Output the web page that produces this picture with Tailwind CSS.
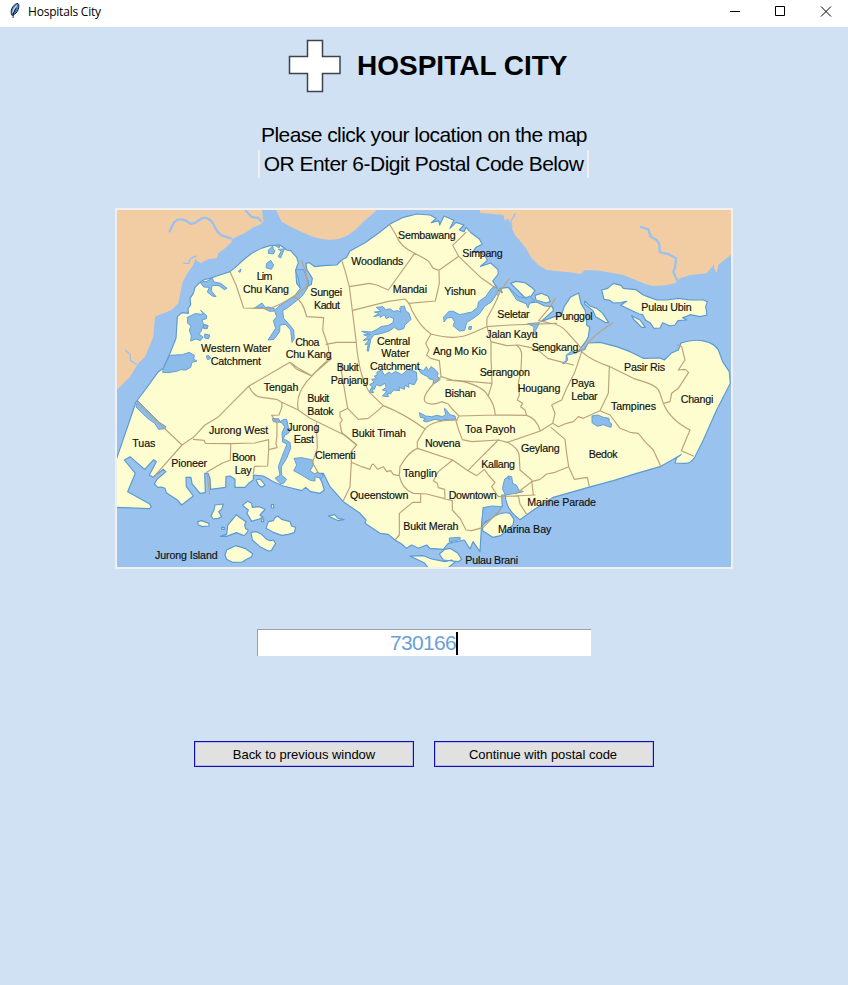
<!DOCTYPE html>
<html lang="en">
<head>
<meta charset="utf-8">
<title>Hospitals City</title>
<script src="https://cdn.jsdelivr.net/npm/@tailwindcss/browser@4"></script>
</head>
<body class="w-[848px] h-[985px] overflow-hidden bg-[#cfe1f3] text-black font-['Liberation_Sans',Arial,sans-serif] flex flex-col">
<header class="h-[27px] shrink-0 bg-white flex items-start">
  <svg class="ml-[8px] mt-[3px] w-[14px] h-[16px]" viewBox="0 0 14 16"><path d="M4 12.500C2.500 9.500 3 6 5 3.500 6.500 1.500 8.500.3 10 .5c1.300.8 1 3.600.2 6C9.300 9 7 11.500 4.800 12z" fill="#4f7fc0" stroke="#1a2538" stroke-width="1"/><path d="M8.800 2.200C6.500 4.500 5 7 4.600 10" stroke="#c9dbed" stroke-width="1.200" fill="none"/><path d="M8 5.500 5.500 10 5 15" stroke="#111" stroke-width=".9" fill="none"/></svg>
  <span class="ml-[6px] mt-[4px] text-[12px] leading-[16px] tracking-[-0.21px] font-['Open_Sans','Noto_Sans',sans-serif]">Hospitals City</span>
  <div class="ml-auto flex">
    <svg class="w-[118px] h-[24px]" viewBox="730 0 118 24" fill="none" stroke="#000" stroke-width="1"><path d="M730 11.500h10M775.500 6.500h9v9h-9z"/><path d="M821 6.500l10 10M831 6.500l-10 10"/></svg>
  </div>
</header>
<main class="flex flex-col items-center">
  <div class="flex self-start ml-[287px] mt-[11px] h-[56px] items-start">
    <svg class="w-[56px] h-[56px]" viewBox="287 38 56 56"><path d="M307.500 40.500h15v16h17.500v17h-17.500v18h-15v-18h-18v-17h18z" fill="#fff" stroke="#3b444d" stroke-width="1.500"/></svg>
    <h1 class="ml-[14px] mt-[12px] text-[28px] leading-[32px] font-bold whitespace-nowrap">HOSPITAL CITY</h1>
  </div>
  <p class="mt-[27px] h-[28px] text-[21px] leading-[28px] whitespace-nowrap tracking-[-0.56px]">Please click your location on the map</p>
  <p class="mt-[1px] ml-[-1px] w-[331px] h-[28px] border-x-2 border-[#f0f0f0] text-center text-[21px] leading-[28px] whitespace-nowrap tracking-[-0.52px]">OR Enter 6-Digit Postal Code Below</p>
  <div class="mt-[30px] w-[618px] h-[361px] self-start ml-[115px] border-2 border-[#f0f0f0]">
  <svg class="block w-[614px] h-[357px]" viewBox="21 30 1842 1071" font-family="Liberation Sans, Arial, sans-serif">
    <rect x="15" y="24" width="1854" height="1083" fill="#9ac2ee"/>
    <g fill="#f2cda3">
      <path d="M15 24H455L460 65 450 74 430 82 410 96 365 118 365 126 345 145 325 160 320 175 295 177 272 190 255 178 250 195 235 215 218 245 205 310 185 330 135 350 130 410 118 440 105 470 85 490 60 530 15 575z"/>
      <path d="M495 24H808L760 65C725 105 690 125 640 118 600 110 550 85 515 65z"/>
      <path d="M1110 24H1869V160L1840 182 1825 195 1820 218 1812 205 1812 193 1800 208 1790 220 1740 225 1710 235 1695 250C1640 263 1615 258 1590 245L1540 225 1470 212 1425 210 1412 222 1390 218 1310 210 1285 195 1265 175 1248 145 1215 105 1202 75 1195 55 1185 62 1180 45 1110 38z"/>
    </g>
    <g fill="none" stroke="#9ac2ee" stroke-width="7" stroke-linejoin="round">
      <path d="M178 97 188 75C200 48 228 58 240 71 262 75 262 55 285 53 318 60 310 95 335 106L365 116M405 30 425 51 445 54 455 65"/><path stroke-width="4" d="M45 450 60 463 62 482 80 493M220 190 237 190 241 175 260 168"/><path d="M1590 80 1615 88 1622 110 1640 120 1648 133 1650 157 1675 162 1698 175 1696 200 1690 215 1702 242"/><path stroke-width="4" d="M1216 40 1202 65 1206 82"/>
    </g>
    <g fill="#fdfdcf" stroke="#5a9ad0" stroke-width="3.500" stroke-linejoin="round">
      <path d="M360 215 375 203 400 180Q440 145 480 137L510 135 530 150 542 152 560 172 565 188 557 210 560 250 575 270 604 253 607 235 590 208 588 190 598 188 615 200 640 197 680 195 695 180 710 172 720 153 765 128 805 100 840 72 880 52 920 42 960 45 978 55 964 68 986 62 989 75 1002 48 1032 61 1020 85 1038 67 1062 75 1048 90 1062 95 1068 82 1085 100 1108 117 1117 133 1098 142 1088 156 1112 158 1127 170 1132 181 1111 199 1142 189 1164 209 1165 222 1148 243 1165 270 1177 278 1170 265 1195 262 1222 290 1250 310 1280 306 1304 318 1328 320 1330 332 1293 365 1333 350 1353 350 1363 319 1382 291 1406 279 1413 311 1425 330 1430 355 1430 375 1439 382 1435 410 1427 425 1404 455 1424 448 1435 429 1470 427 1520 440 1560 455 1600 475 1650 474 1663 480 1683 460 1705 450 1713 429C1765 411 1810 425 1825 450L1838 485 1858 515 1861 550 1820 630 1780 720 1755 770Q1743 791 1725 790L1695 789 1700 773 1713 764 1690 778 1650 800 1580 820 1510 842 1435 862 1330 892 1270 930 1230 959Q1187 929 1186 885L1175 885 1177 920 1120 923 1115 970 1110 1055 1089 1025 1080 1047 1063 1020 1015 1030 1000 1048 960 1045 950 1035 925 1045 905 1035 890 1045 875 1032 855 1020 835 1003 810 1000 765 970 768 960 750 940 700 905 660 860 640 820 622 820 635 845 643 870 630 880 602 875 587 862 575 872 520 858 490 845 460 828 430 825 430 840 416 850 405 862 375 862 375 838 360 828 348 830 347 862 302 868 300 835 294 820 284 820 286 878 270 880 246 851 243 832 228 832 229 860 250 888 215 915 202 900 169 878 165 865 154 861 144 862 133 852 142 837 168 815 160 808 129 832 118 825 139 785 131 779 104 808 60 770 43 780 76 820 53 875 118 911 124 920 118 926 15 922V790L78 606 105 570 145 515 160 505 180 460 198 415 202 350 216 338 235 340 234 325 242 315 240 295 250 280 255 262 270 247 285 238 300 235 320 228z"/>
      <path d="M1202 250 1218 244 1245 248 1262 260 1275 272 1260 293 1243 291zM1275 286 1293 280 1315 289 1321 305 1308 309 1278 300z"/>
      <path d="M1475 270 1493 265 1510 250 1533 256 1540 265 1578 269 1600 285 1613 290 1640 300 1670 300 1705 295 1740 300 1780 300 1792 305 1787 320 1791 345 1770 350 1740 344 1730 349 1718 353 1730 360 1704 362 1695 375 1680 378 1658 368 1650 384 1632 385 1620 368 1607 361 1598 344 1587 342 1532 316 1550 304 1533 308 1510 309 1500 301 1482 298z"/>
      <path d="M1424 303 1440 318 1460 325 1478 340 1496 368 1485 367 1457 350 1449 332 1424 312zM1565 347 1590 360 1606 382 1595 382 1570 357z"/>
      <path d="M315 915 340 912 335 928 326 935 335 950 325 955 310 957 303 948 312 930zM263 965 275 962 297 970 297 978 278 980 265 975zM398 916 412 904 425 910 427 922 448 920 465 928 450 945 459 952 447 957 425 964 418 952 411 940 415 930zM331 1009 350 1003 353 976 379 944 395 956 408 965 404 975 407 986 415 990 410 1000 402 1007 379 998 350 1009zM475 965 490 962 495 953 503 948 515 958 540 965 545 978 557 982 553 998 535 1003 515 1006 490 997 468 985zM423 997 439 995 455 1003 470 1018 480 1022 490 1020 497 1030 484 1052 475 1053 450 1040 427 1020zM345 1065 350 1050 377 1037 405 1045 428 1061 425 1070 410 1078 397 1086 367 1087 350 1078zM484 914h7v10h-7zM335 982h8v6h-8zM455 957h6v8h-6z"/>
      <path d="M1118 976Q1165 930 1200 940L1212 958 1209 975 1172 1007 1148 1012 1118 992zM988 1062 1005 1048 1020 1045 1043 1059 1055 1078 1045 1085 1000 1080zM900 1068 940 1067 965 1077 1005 1085 1025 1080 1035 1087 1005 1110 960 1110 942 1088z"/>
      <path d="M438 840 450 837 465 855 455 862 446 856zM655 948 674 944 684 955 702 959 685 962z"/>
    </g>
    <g fill="#8cbcea" stroke="#62a0d6" stroke-width="3" stroke-linejoin="round">
      <path d="M270 246 290 244 307 235 312 246 332 250 351 265 343 269 327 257 306 256 304 272 318 290 307 288 292 276 298 262 281 261zM470 190 482 181 491 195 484 208 468 203zM475 150 488 138 490 148 495 152 490 162 475 160zM505 148 523 147 512 174 505 170 514 153zM385 214 393 207 390 217zM495 136 510 136 507 144z"/>
      <path d="M232 352 255 341 281 343 272 331 290 347 289 356 276 360 279 371 294 379 287 387 277 383 273 395 266 401 279 411 271 422 258 417 242 423 244 408 238 390 243 378 233 370zM284 402 299 405 296 416 284 414zM280 374 294 376 292 386 281 384zM160 505 179 466 217 464 238 457 253 466 251 478 261 483 246 487 242 502 227 510 211 509 200 514 174 518 158 517zM289 468 297 467 302 475 293 479zM83 602 106 625 148 667 168 680 165 686 146 688 134 670 113 655 78 621z"/>
      <path d="M556 210 565 236 571 265 552 290 510 316 497 328 478 321 465 322 456 309 432 325 457 323 479 334 494 333 500 350 490 362 497 385 474 420 492 418 509 395 510 375 526 373 542 390 546 427 553 415 551 390 539 375 521 355 518 332 533 323 575 290 592 265 596 245 580 208z"/>
      <g transform="translate(735 270)">
        <path d="M137 50 148 48 152 62 162 70 168 88 160 96 150 104 146 116 130 120 118 112 104 122 88 128 72 132 58 134 48 146 40 184 36 182 40 162 30 164 44 148 24 152 40 140 26 134 46 134 20 124 50 126 66 118 78 110 100 106 114 98 116 86 104 80 94 86 88 74 76 82 74 76 56 80 72 70 58 66 78 64 64 52 84 50 92 60 104 56 116 64 128 62 138 66 134 56z"/>
        <path d="M66 246 80 240 88 256 102 246 110 252 122 244 140 254 160 238 184 246 186 268 178 284 160 280 162 292 150 286 148 298 132 292 134 302 116 300 106 312 98 310 100 320 82 318 96 304 82 300 94 292 90 280 76 288 64 284 58 298 50 296 56 308 42 306 52 290 44 284 58 276 50 268 64 266 58 258 66 256z"/>
        <path d="M190 236 206 242 214 230 220 242 228 230 240 238 250 250 246 258 256 268 246 276 234 282 236 270 222 266 218 260 206 254 196 248zM193 368 212 378 230 380 246 376 262 380 272 374 268 354 276 362 284 374 300 378 302 388 286 390 270 388 258 392 240 388 214 396 204 392 212 386 196 382z"/>
      </g>
      <path d="M1158 257 1166 273 1155 290 1145 305 1124 319 1108 342 1084 359 1070 367 1064 391 1048 393 1029 377 1034 366 1026 352 1011 354 1002 366 1001 351 1017 334 1030 334 1049 344 1085 336 1103 322 1105 306 1127 290 1145 265zM1077 380 1085 379 1083 389 1075 387z"/>
      <path d="M1195 262 1226 290 1248 295 1258 288 1275 302 1259 309 1254 324 1248 311 1220 300zM1253 371 1289 368 1277 391 1280 405 1270 403 1272 380zM1357 489 1368 483 1369 465 1384 454 1402 458 1370 466 1373 480 1362 492z"/>
      <path d="M1446 648 1463 645 1480 652 1497 655 1498 665 1505 672 1503 682 1490 678 1480 674 1462 679 1446 668zM487 656 506 656 510 665 522 658 530 658 535 682 542 690 535 700 525 705 520 716 540 727 542 745 530 775 514 800 514 825 530 838 521 850 510 850 495 835 510 825 505 800 516 770 531 732 518 726 516 700 524 680 514 667 490 665zM552 775 575 773 608 780 610 795 600 812 615 822 620 817 641 825 635 835 615 830 615 843 601 841 575 825 551 812 560 795zM1184 837 1192 832 1200 840 1193 828 1205 830 1208 850 1220 856 1226 870 1240 875 1216 880 1186 885 1177 866zM1120 923 1145 918 1175 920Q1165 950 1115 970zM1018 1014 1050 1012 1051 1018 1018 1026z"/>
    </g>
    <g fill="none" stroke="#bca17d" stroke-width="3.500" stroke-linejoin="round" stroke-linecap="round">
      <path d="M360 215 378 255 401 324 480 326Q535 305 590 260 598 240 575 182M552 290Q578 300 590 350L641 353 638 390 655 440 658 475 605 527 565 505 540 487 417 558 365 610 326 650 285 675 250 712 216 735 130 832M417 558Q430 590 455 592L500 598 515 607 516 620 507 645 485 646M540 487 560 508 600 526M665 475 605 527M565 630Q555 590 590 545L632 500M84 610 216 735M515 607 565 630 600 655 703 705 740 735M250 718 282 721 286 730 360 731 435 729 476 719 476 749 501 743 498 730 501 705 501 670 485 646M476 749 473 798 433 799 430 820M362 731 361 780 336 790 291 816 299 883M619 670 622 745 607 788 626 820"/>
      <path d="M695 180 706 215 718 260 738 420Q748 540 782 581L820 617 Q880 640 945 687M718 260 778 250 800 255 835 270 914 160Q870 140 858 105L840 75M728 331 835 304 885 297Q900 310 905 330 930 380 963 402 1000 412 1030 412 1060 412 1085 400L1130 380M1068 97 1028 136 1046 169 987 211 970 205 955 183 942 175 914 160M1046 169 1115 235 1163 268 1164 290 1150 320 1131 355 1130 380M987 211 988 250 976 303 895 310M648 433 680 427 738 427M963 402 947 430 957 450 950 465 962 475 988 482 993 530 970 552Q935 590 945 605 960 620 995 605L1015 612 1025 625 1047 648 1156 645M993 530 1027 540 1146 550 1143 470 1143 425 1131 380M1130 380 1200 375 1340 370M1143 425 1190 437 1225 435 1260 442M1010 540 1060 545Q1120 560 1132 585 1153 610 1156 645L1250 646Q1280 655 1291 693M1146 550 1135 587M1218 435Q1235 445 1235 465L1233 510 1225 550 1228 585 1222 600 1238 610 1232 620 1245 630 1250 646M1197 237 1170 275 1160 300M1336 295 1321 320 1286 362 1318 369Q1350 372 1370 395L1410 440 1415 455 1395 515 1370 565 1355 600 1325 615 1335 640 1328 670 1291 693 1192 727 1165 720 1085 725 1057 719 1046 690 1038 663 1047 648M1415 455 1440 422Q1470 390 1510 369M1260 442 1290 455 1313 475 1350 485 1390 495M1415 455Q1440 480 1500 500L1570 535 1610 548Q1645 560 1650 580L1660 610 1680 605 1685 580 1705 565 1718 545 1736 517 1725 508 1705 510 1725 480 1715 440 1702 435M1498 500 1495 580 1470 632 1420 655 1405 650 1390 665 1370 670 1345 680 1328 670M1470 632 1500 645 1530 685 1560 697 1585 700 1605 725 1630 750 1653 800M1660 610Q1680 660 1740 690L1714 752 1750 768M1323 682 1365 718 1370 760 1376 800 1393 838 1432 832 1438 860M1376 800 1335 817 1310 822 1290 838 1265 845 1217 882"/>
      <path d="M690 490 713 625 690 637 690 650 697 660 690 670 695 697 740 735 723 755 724 787 755 800 780 808 785 795 790 792 803 808 820 800 830 815 842 812 850 824 868 827 870 800Q895 755 922 745L1028 780 1074 812 1100 785 1165 720M713 625 745 658 775 655 800 635 820 617M945 687 922 725 922 745M945 687Q965 660 1042 660M1028 780 985 815 970 842 982 850 985 863 1004 868 1005 898M868 827Q875 867 910 880L950 882 1027 902 1027 930 1050 955 1068 990 1085 992 1120 982 1170 930M1074 812 1100 827 1123 808 1135 825 1155 847 1145 860 1165 890 1275 885M1192 727Q1230 745 1228 775L1230 810 1265 840 1270 885M932 882V907L908 907 868 940 868 1005 855 1020M724 787 720 860 700 902M1225 887 1230 912 1250 943"/>
    </g>
    <g font-size="32" fill="#111" stroke="#111" stroke-width=".5">
      <text x="440" y="241" textLength="47">Lim</text><text x="399" y="278" textLength="138">Chu Kang</text>
      <text x="601" y="289" textLength="95">Sungei</text><text x="612" y="326" textLength="78">Kadut</text>
      <text x="556" y="438" textLength="72">Choa</text><text x="527" y="475" textLength="138">Chu Kang</text>
      <text x="273" y="457" textLength="211">Western Water</text><text x="302" y="494" textLength="151">Catchment</text>
      <text x="461" y="572" textLength="104">Tengah</text><text x="680" y="513" textLength="66">Bukit</text><text x="662" y="552" textLength="113">Panjang</text>
      <text x="724" y="195" textLength="156">Woodlands</text><text x="864" y="117" textLength="173">Sembawang</text><text x="1057" y="170" textLength="121">Simpang</text>
      <text x="848" y="279" textLength="103">Mandai</text><text x="1003" y="285" textLength="95">Yishun</text>
      <text x="801" y="434" textLength="99">Central</text><text x="814" y="472" textLength="85">Water</text><text x="780" y="510" textLength="149">Catchment</text>
      <text x="969" y="465" textLength="161">Ang Mo Kio</text><text x="1109" y="529" textLength="151">Serangoon</text>
      <text x="1162" y="355" textLength="97">Seletar</text><text x="1129" y="413" textLength="154">Jalan Kayu</text>
      <text x="1336" y="361" textLength="112">Punggol</text><text x="1594" y="332" textLength="151">Pulau Ubin</text>
      <text x="1265" y="452" textLength="140">Sengkang</text><text x="1542" y="514" textLength="123">Pasir Ris</text>
      <text x="1223" y="577" textLength="128">Hougang</text><text x="1384" y="562" textLength="70">Paya</text><text x="1384" y="601" textLength="79">Lebar</text>
      <text x="1503" y="629" textLength="135">Tampines</text><text x="1712" y="609" textLength="98">Changi</text><text x="1436" y="773" textLength="87">Bedok</text>
      <text x="1233" y="755" textLength="116">Geylang</text><text x="1252" y="917" textLength="206">Marine Parade</text><text x="1164" y="998" textLength="160">Marina Bay</text>
      <text x="1066" y="1091" textLength="158">Pulau Brani</text><text x="1065" y="698" textLength="151">Toa Payoh</text><text x="1004" y="591" textLength="94">Bishan</text>
      <text x="945" y="740" textLength="106">Novena</text><text x="1114" y="803" textLength="101">Kallang</text><text x="879" y="831" textLength="102">Tanglin</text>
      <text x="1016" y="897" textLength="144">Downtown</text><text x="720" y="897" textLength="175">Queenstown</text><text x="880" y="989" textLength="165">Bukit Merah</text>
      <text x="725" y="710" textLength="163">Bukit Timah</text><text x="615" y="778" textLength="122">Clementi</text>
      <text x="592" y="605" textLength="66">Bukit</text><text x="592" y="644" textLength="79">Batok</text><text x="532" y="692" textLength="96">Jurong</text><text x="551" y="730" textLength="61">East</text>
      <text x="297" y="701" textLength="178">Jurong West</text><text x="366" y="782" textLength="71">Boon</text><text x="374" y="821" textLength="51">Lay</text>
      <text x="67" y="740" textLength="69">Tuas</text><text x="184" y="802" textLength="107">Pioneer</text><text x="135" y="1076" textLength="188">Jurong Island</text>
    </g>
  </svg>
  </div>
  <div class="self-start ml-[257px] mt-[60px] w-[334px] h-[27px] bg-white border-t border-l border-[#a0a0a0] flex items-center justify-center">
    <span class="text-[21px] leading-[26px] text-[#6a9fd8] tracking-[-0.68px]">730166</span><span class="w-[2px] h-[23px] bg-black mr-[1px]"></span>
  </div>
  <div class="self-start ml-[194px] mt-[85px] flex gap-[20px]">
    <button class="w-[220px] h-[26px] border border-[#1010ac] bg-[#e1e1e1] text-[13px] leading-[24px] pt-[1px] tracking-[-0.03px] whitespace-nowrap shadow-[inset_0_0_0_1px_#b9b9ee]">Back to previous window</button>
    <button class="w-[220px] h-[26px] border border-[#1010ac] bg-[#e1e1e1] text-[13px] leading-[24px] pt-[1px] pr-[2px] tracking-[-0.03px] whitespace-nowrap shadow-[inset_0_0_0_1px_#b9b9ee]">Continue with postal code</button>
  </div>
</main>
</body>
</html>
